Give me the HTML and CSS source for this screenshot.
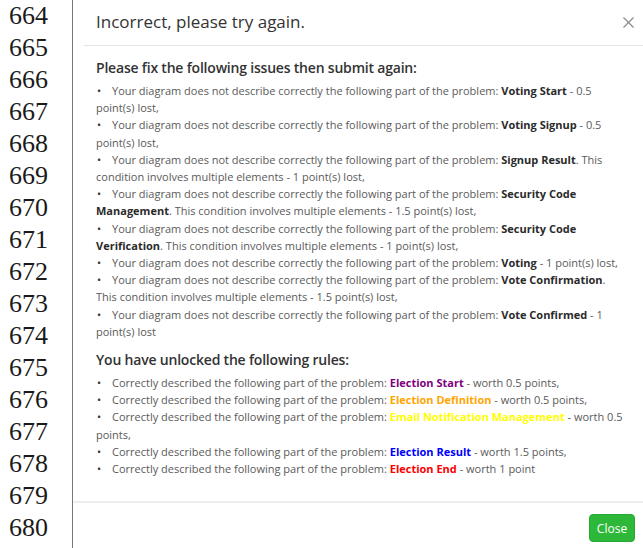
FILE: index.html
```html
<!DOCTYPE html>
<html lang="en">
<head>
<meta charset="utf-8">
<title>Incorrect, please try again.</title>
<link rel="stylesheet" href="styles.css">
</head>
<body>
<div class="page">
  <div class="gutter">
    <div>664</div><div>665</div><div>666</div><div>667</div><div>668</div><div>669</div>
    <div>670</div><div>671</div><div>672</div><div>673</div><div>674</div><div>675</div>
    <div>676</div><div>677</div><div>678</div><div>679</div><div>680</div>
  </div>
  <div class="modal">
    <div class="modal-header">
      <h5 class="modal-title">Incorrect, please try again.</h5>
      <button class="btn-x" type="button" aria-label="Close">
        <svg width="11" height="11" viewBox="0 0 11 11"><path d="M0.5 0.5L10.5 10.5M10.5 0.5L0.5 10.5" stroke="#8a8a8a" stroke-width="1.2" fill="none"/></svg>
      </button>
    </div>
    <div class="modal-body">
      <h6 class="section-title">Please fix the following issues then submit again:</h6>
      <ul class="items">
        <li>Your diagram does not describe correctly the following part of the problem: <b>Voting Start</b> - 0.5 point(s) lost,</li>
        <li>Your diagram does not describe correctly the following part of the problem: <b>Voting Signup</b> - 0.5 point(s) lost,</li>
        <li>Your diagram does not describe correctly the following part of the problem: <b>Signup Result</b>. This condition involves multiple elements - 1 point(s) lost,</li>
        <li>Your diagram does not describe correctly the following part of the problem: <b>Security Code Management</b>. This condition involves multiple elements - 1.5 point(s) lost,</li>
        <li>Your diagram does not describe correctly the following part of the problem: <b>Security Code Verification</b>. This condition involves multiple elements - 1 point(s) lost,</li>
        <li>Your diagram does not describe correctly the following part of the problem: <b>Voting</b> - 1 point(s) lost,</li>
        <li>Your diagram does not describe correctly the following part of the problem: <b>Vote Confirmation</b>. This condition involves multiple elements - 1.5 point(s) lost,</li>
        <li>Your diagram does not describe correctly the following part of the problem: <b>Vote Confirmed</b> - 1 point(s) lost</li>
      </ul>
      <h6 class="section-title second">You have unlocked the following rules:</h6>
      <ul class="items">
        <li>Correctly described the following part of the problem: <b class="c-purple">Election Start</b> - worth 0.5 points,</li>
        <li>Correctly described the following part of the problem: <b class="c-orange">Election Definition</b> - worth 0.5 points,</li>
        <li>Correctly described the following part of the problem: <b class="c-yellow">Email Notification Management</b> - worth 0.5 points,</li>
        <li>Correctly described the following part of the problem: <b class="c-blue">Election Result</b> - worth 1.5 points,</li>
        <li>Correctly described the following part of the problem: <b class="c-red">Election End</b> - worth 1 point</li>
      </ul>
    </div>
    <div class="modal-footer">
      <button class="btn-close" type="button">Close</button>
    </div>
  </div>
</div>
</body>
</html>
```

FILE: styles.css
```css
html, body {
  margin: 0;
  padding: 0;
  background: #fff;
  overflow: hidden;
}

.page {
  display: flex;
  width: 643px;
  height: 548px;
}

/* line numbers column */
.gutter {
  width: 63px;
  padding-left: 9px;
  border-right: 1px solid #777;
  font-family: "Liberation Serif", serif;
  font-size: 26px;
  line-height: 32px;
  color: #1a1a1a;
  flex-shrink: 0;
}

.modal {
  flex: 1;
  display: flex;
  flex-direction: column;
  font-family: "Open Sans", sans-serif;
  color: #5a5a5a;
  min-width: 0;
}

.modal-header {
  display: flex;
  align-items: center;
  justify-content: space-between;
  height: 46px;
  box-sizing: border-box;
  margin-left: 11px;
  padding: 0 9px 2px 12px;
  border-bottom: 1px solid #e2e4e8;
}

.modal-title {
  margin: 0;
  font-size: 17px;
  font-weight: 400;
  color: #333;
}

.btn-x {
  border: 0;
  background: none;
  padding: 0;
  display: flex;
  margin-top: 2px;
}

.modal-body {
  padding: 13px 18px 24px 23px;
}

.section-title {
  margin: 0 0 5px 0;
  font-size: 14px;
  line-height: 18px;
  font-weight: 600;
  letter-spacing: -0.2px;
  color: #333;
}

.section-title.second {
  margin-top: 11px;
}

.items {
  list-style: none;
  margin: 0;
  padding: 0;
  font-size: 11px;
  line-height: 17.2px;
}

/* bullet glyph sits inline before the first word, so wrapped lines start flush left */
.items li::before {
  content: "\2022";
  display: inline-block;
  width: 16px;
  padding-left: 1px;
  box-sizing: border-box;
  color: #333;
}

.items b {
  color: #2a2a2a;
  font-weight: 700;
}

.items b.c-purple { color: #800080; }
.items b.c-orange { color: #ffa500; }
.items b.c-yellow { color: #ffff00; }
.items b.c-blue { color: #0000ff; }
.items b.c-red { color: #ff0000; }

.modal-footer {
  border-top: 2px solid #eeeeee;
  display: flex;
  justify-content: flex-end;
  padding: 11px 8px 0 0;
}

.btn-close {
  width: 46px;
  height: 28px;
  border: 1px solid #27a832;
  border-radius: 4px;
  background: #2eb839;
  color: #fff;
  font-family: "Open Sans", sans-serif;
  font-size: 12px;
  padding: 0;
}
```
